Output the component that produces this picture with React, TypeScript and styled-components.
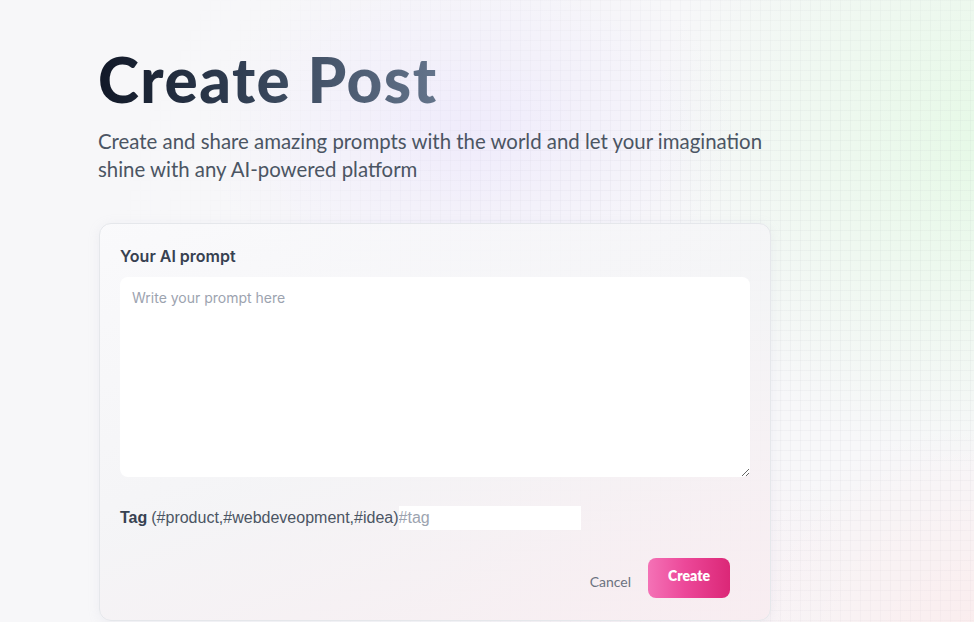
import React from "react";
import styled, { createGlobalStyle } from "styled-components";

const Global = createGlobalStyle`
  * { box-sizing: border-box; }
  html, body { margin: 0; padding: 0; }
  body {
    font-family: "Lato", "Open Sans", sans-serif;
    background: #f7f7f9;
    overflow: hidden;
  }
`;

const Page = styled.main`
  position: relative;
  width: 974px;
  height: 622px;
  overflow: hidden;
  background:
    radial-gradient(ellipse 380px 260px at 470px 130px, rgba(228, 218, 255, 0.4), transparent 70%),
    radial-gradient(ellipse 460px 440px at 1000px 140px, rgba(222, 250, 222, 0.7), transparent 75%),
    radial-gradient(ellipse 400px 320px at 1000px 650px, rgba(255, 226, 226, 0.55), transparent 70%),
    radial-gradient(ellipse 300px 200px at 640px 560px, rgba(252, 228, 238, 0.45), transparent 70%),
    #f7f7f9;
`;

const Grid = styled.div`
  position: absolute;
  inset: 0;
  pointer-events: none;
  background-image:
    linear-gradient(to right, rgba(120, 120, 140, 0.05) 1px, transparent 1px),
    linear-gradient(to bottom, rgba(120, 120, 140, 0.05) 1px, transparent 1px);
  background-size: 10px 10px;
  -webkit-mask-image: radial-gradient(ellipse 800px 700px at 820px 300px, #000 25%, transparent 90%);
  mask-image: radial-gradient(ellipse 800px 700px at 820px 300px, #000 25%, transparent 90%);
`;

const Section = styled.section`
  position: relative;
  display: flex;
  flex-direction: column;
  align-items: flex-start;
  padding: 44px 0 0 99px;
  width: 100%;
`;

const Title = styled.h1`
  margin: 0 0 0 -1px;
  font-family: "Lato", sans-serif;
  font-size: 62px;
  font-weight: 900;
  line-height: 1.15;
  letter-spacing: 1.5px;
  background: linear-gradient(90deg, #111827 0%, #334155 45%, #64748b 100%);
  -webkit-background-clip: text;
  background-clip: text;
  color: transparent;
`;

const Lead = styled.p`
  margin: 12px 0 0 -1px;
  max-width: 672px;
  font-family: "Lato", sans-serif;
  font-size: 20.4px;
  line-height: 28px;
  color: #4b5563;
`;

const Card = styled.form`
  margin-top: 40px;
  width: 672px;
  display: flex;
  flex-direction: column;
  padding: 20px 20px 22px;
  border: 1px solid #e5e7eb;
  border-radius: 12px;
  background: linear-gradient(160deg, rgba(250, 250, 252, 0.85) 0%, rgba(244, 244, 246, 0.85) 50%, rgba(248, 236, 240, 0.9) 100%);
  box-shadow: 0 2px 12px rgba(180, 180, 200, 0.15);
`;

const Label = styled.label`
  display: flex;
  flex-direction: column;
  gap: 9px;
`;

const LabelText = styled.span`
  font-family: "Inter", sans-serif;
  font-size: 16px;
  font-weight: 600;
  line-height: 24px;
  color: #374151;
`;

const TextArea = styled.textarea`
  width: 100%;
  height: 200px;
  border: none;
  border-radius: 8px;
  background: #ffffff;
  padding: 12px 12px;
  font-family: "Inter", sans-serif;
  font-size: 14px;
  color: #374151;
  resize: vertical;
  outline: none;
  &::placeholder { color: #9ca3af; }
`;

const TagRow = styled.label`
  display: flex;
  align-items: center;
  margin-top: 29px;
  font-family: "Liberation Sans", Arial, sans-serif;
  font-size: 16px;
  color: #374151;
`;

const TagBold = styled.strong`
  font-weight: 700;
  margin-right: 4px;
`;

const TagHint = styled.span`
  color: #4b5563;
`;

const TagInput = styled.input`
  width: 182px;
  height: 24px;
  border: none;
  padding: 0;
  background: #ffffff;
  font-family: "Liberation Sans", Arial, sans-serif;
  font-size: 16px;
  color: #374151;
  outline: none;
  &::placeholder { color: #9ca3af; }
`;

const Actions = styled.div`
  display: flex;
  justify-content: flex-end;
  align-items: flex-end;
  gap: 17px;
  margin-top: 28px;
  padding-right: 20px;
`;

const CancelLink = styled.a`
  font-family: "Lato", sans-serif;
  font-size: 14px;
  color: #6b7280;
  text-decoration: none;
  line-height: 20px;
  margin-bottom: 6px;
`;

const CreateButton = styled.button`
  height: 40px;
  padding: 0 20px 4px;
  border: none;
  border-radius: 8px;
  background: linear-gradient(90deg, #f472b6 0%, #ec4899 45%, #db2777 100%);
  color: #ffffff;
  font-family: "Lato", sans-serif;
  font-size: 14px;
  font-weight: 800;
  line-height: 20px;
  cursor: pointer;
`;

export default function App() {
  return (
    <>
      <Global />
      <Page>
        <Grid />
        <Section>
          <Title>Create Post</Title>
          <Lead>
            Create and share amazing prompts with the world and let your imagination shine
            with any AI-powered platform
          </Lead>
          <Card onSubmit={(e) => e.preventDefault()}>
            <Label>
              <LabelText>Your AI prompt</LabelText>
              <TextArea placeholder="Write your prompt here" />
            </Label>
            <TagRow>
              <TagBold>Tag</TagBold>
              <TagHint>(#product,#webdeveopment,#idea)</TagHint>
              <TagInput placeholder="#tag" />
            </TagRow>
            <Actions>
              <CancelLink href="#">Cancel</CancelLink>
              <CreateButton type="submit">Create</CreateButton>
            </Actions>
          </Card>
        </Section>
      </Page>
    </>
  );
}
